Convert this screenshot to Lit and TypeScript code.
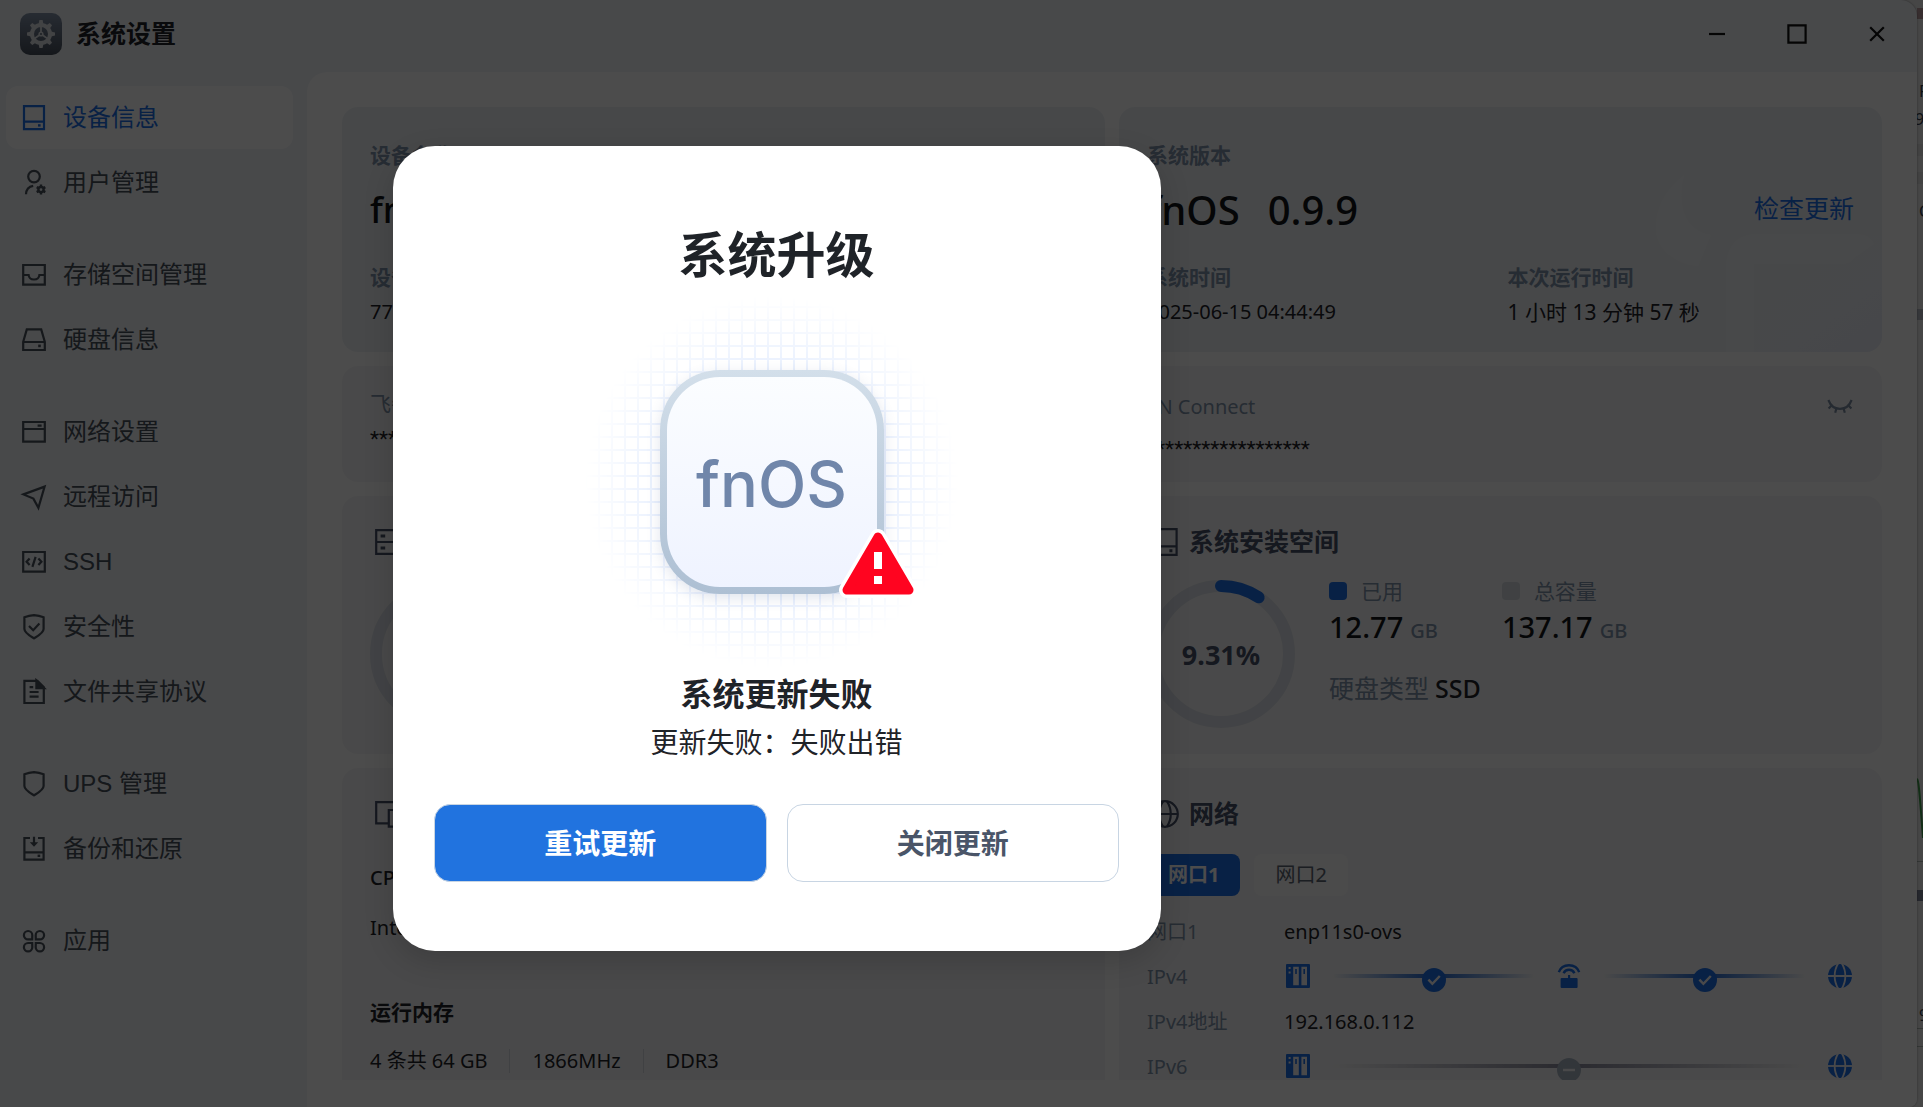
import { LitElement, html, css, svg, nothing, TemplateResult, SVGTemplateResult } from "lit";
import { customElement } from "lit/decorators.js";
import { classMap } from "lit/directives/class-map.js";

type Glyph = SVGTemplateResult;

const glyphs: Record<string, Glyph> = {
  device: svg`<path d="M4 2.2h20v23H4zM4 17.6h20"/><path d="M18 20.2h2.6v2.4H18z" fill="currentColor" stroke="none"/>`,
  user: svg`<circle cx="14" cy="7.6" r="5.8"/><path d="M6 25.2c.2-4.400 2.600-7.600 7.200-8.400"/><g stroke-width="2.400"><circle cx="21" cy="20.600" r="2.600"/><path d="M21 15.600v2M21 23.600v2M16.700 18.100l1.700 1M23.600 22.100l1.700 1M16.700 23.100l1.700-1M23.600 19.100l1.700-1"/></g>`,
  inbox: svg`<path d="M3.200 4h21.600v19.600H3.200zM3.200 14h5.400c.6 6 10.200 6 10.800 0h5.400"/>`,
  disk: svg`<path d="M6.800 3.400h14.400l3.600 12.400v8.200H3.200v-8.200zM3.200 16h21.600"/><path d="M18.200 18.600h2.600v2.600h-2.600z" fill="currentColor" stroke="none"/>`,
  panel: svg`<path d="M3.200 4h21.600v19.600H3.200zM3.200 11h21.600M17.600 7.600h4"/>`,
  send: svg`<path d="M24.600 3.600L3.400 11.400l10 4.200 5 9.200z"/>`,
  code: svg`<path d="M3.200 4h21.600v19.600H3.200z"/><path d="M9.600 10.600l-3 3.200 3 3.200M18.400 10.600l3 3.200-3 3.200M15.600 8.800l-3.200 10"/>`,
  shieldCheck: svg`<path d="M14 2.200c3.200.2 6.400.8 9.600 2V16c0 3.800-5.400 6.800-9.600 9.400C9.800 22.800 4.400 19.800 4.400 16V4.200c3.200-1.200 6.400-1.800 9.600-2z"/><path d="M9 13l4.200 4.200 6.200-6.600"/>`,
  shield: svg`<path d="M14 2.200c3.200.2 6.400.8 9.600 2V16c0 3.800-5.400 6.800-9.600 9.400C9.800 22.800 4.400 19.800 4.400 16V4.200c3.200-1.200 6.400-1.800 9.600-2z"/>`,
  file: svg`<path d="M4.400 2.800h13l6.400 6.400v15.800H4.400z"/><path d="M16.400 2.400v7.800h7.800z" fill="currentColor"/><path d="M9.600 9.200h3.600M9.600 14h9M9.600 18.600h9"/>`,
  backup: svg`<path d="M10 3H4.400v21.600h19.200V3H18M4.400 17.400h19.200M14 1.800V9"/><path d="M9.800 7.200h8.400L14 11.800z" fill="currentColor" stroke="none"/><path d="M17.600 19.600h2.600V22h-2.600z" fill="currentColor" stroke="none"/>`,
  apps: svg`<path d="M12.200 12.400H8.100A4.200 4.200 0 1 1 12.300 8.200zM15.800 12.400h4.100a4.200 4.200 0 1 0-4.200-4.200zM12.200 16H8.100a4.200 4.200 0 1 0 4.200 4.200zM15.800 16h4.100a4.200 4.200 0 1 1-4.200 4.200z"/>`,
  server: svg`<path d="M2.200 2.200h23.600v23.600H2.200zM2.200 14h23.600"/><path d="M6.600 8h4.600M6.600 20h4.600" stroke-width="2.800"/>`,
  cpu: svg`<path d="M14 23.400H2.200V2.200h23.600v6"/><path d="M14.800 10h11v16.600h-11z"/>`,
  globe: svg`<circle cx="14" cy="14" r="12.800"/><path d="M1.200 14h25.600M12 1.400C7 9 7 19 12 26.600M16 1.400C21 9 21 19 16 26.600"/>`,
  space: svg`<path d="M2.600 1.200h23v25.600h-23zM2.600 18.400h23"/><path d="M18.400 21.200h3v3h-3z" fill="currentColor" stroke="none"/>`,
  minimize: svg`<path d="M6 14h16"/>`,
  maximize: svg`<path d="M5.400 5.400h17.200v17.200H5.400z"/>`,
  close: svg`<path d="M7.200 7.200l13.600 13.600M20.800 7.200L7.200 20.800"/>`,
  eyeClosed: svg`<path d="M2.400 7c2.200 6 6.600 8.800 11.600 8.800S23.400 13 25.600 7"/><path d="M5.800 12.200l-3.200 3.400M10.400 15.400l-1.200 4.400M17.600 15.400l1.200 4.400M22.200 12.200l3.200 3.400"/>`,
};

const solid: Record<string, Glyph> = {
  nas: svg`<path fill-rule="evenodd" d="M3 2h22a1 1 0 0 1 1 1v22a1 1 0 0 1-1 1H3a1 1 0 0 1-1-1V3a1 1 0 0 1 1-1zM9.200 4.800v18.400h5.600V4.800zM17.400 4.800v18.400H23V4.800zM4.600 5v2h2V5zM4.600 9.400v2h2v-2z"/><path d="M11.200 7h1.600v5h-1.600zM19.400 7H21v5h-1.600z"/>`,
  router: svg`<path d="M6.600 16h6.400v-3h2.200v3h6.400a1 1 0 0 1 1 1v8a1 1 0 0 1-1 1H6.600a1 1 0 0 1-1-1v-8a1 1 0 0 1 1-1z"/><path d="M3.800 10.200C7 1 21 1 24.200 10.200M8.600 11.200c2-4.600 8.800-4.600 10.800 0" fill="none" stroke="currentColor" stroke-width="2.400"/>`,
  world: svg`<circle cx="14" cy="14" r="12"/><g fill="none" stroke="#f6f6f7" stroke-width="1.800"><path d="M1 14h26"/><path d="M12.400 1C7.400 9 7.400 19 12.400 27M15.600 1C20.600 9 20.600 19 15.600 27"/></g>`,
};

const line = (name: string, cls = "") => html`
  <svg class="icon ${cls}" viewBox="0 0 28 28" fill="none" stroke="currentColor" stroke-width="2.200" aria-hidden="true">${glyphs[name]}</svg>`;
const filled = (name: string) => html`
  <svg class="icon" viewBox="0 0 28 28" fill="currentColor" aria-hidden="true">${solid[name]}</svg>`;

const iconStyles = css`
  .icon { width: 28px; height: 28px; flex: none; display: block; }
`;

/* ---------- sidebar ---------- */

@customElement("settings-nav")
class SettingsNav extends LitElement {
  static styles = [iconStyles, css`
    :host { display: block; }
    nav { display: flex; flex-direction: column; gap: 29px; padding: 14px 14px 14px 6px; }
    .group { display: flex; flex-direction: column; gap: 2px; }
    .item {
      display: flex; align-items: center; gap: 15px; height: 63px; padding: 0 14px;
      border-radius: 12px; color: #49505a; text-decoration: none;
      font-size: 24px; line-height: 36px; font-family: "Liberation Sans", "Noto Sans CJK SC", sans-serif;
    }
    .active { background: #fff; color: #1d6fe8; }
  `];

  private groups: [string, string][][] = [
    [["device", "设备信息"], ["user", "用户管理"]],
    [["inbox", "存储空间管理"], ["disk", "硬盘信息"]],
    [["panel", "网络设置"], ["send", "远程访问"], ["code", "SSH"], ["shieldCheck", "安全性"], ["file", "文件共享协议"]],
    [["shield", "UPS 管理"], ["backup", "备份和还原"]],
    [["apps", "应用"]],
  ];

  render() {
    return html`<nav>${this.groups.map((g) => html`
      <div class="group">${g.map(([icon, label]) => html`
        <a href="#" class=${classMap({ item: true, active: icon === "device" })}>${line(icon)}<span>${label}</span></a>`)}
      </div>`)}</nav>`;
  }
}

/* ---------- device information ---------- */

@customElement("device-info")
class DeviceInfo extends LitElement {
  static styles = [iconStyles, css`
    :host { display: block; overflow: hidden; }
    .grid { display: grid; grid-template-columns: 1fr 1fr; gap: 14px; }
    .card { position: relative; border-radius: 16px; background: #f6f6f7; padding: 0 28px; overflow: hidden; }
    .hero { background: #eff2f6; padding-top: 34px; padding-bottom: 26px; }
    .label { font-size: 21px; line-height: 28px; color: #8193ab; }
    .strong { font-weight: 700; }
    .text { font-size: 20px; line-height: 28px; color: #1f2328; }
    .large { font-size: 21px; }
    .bold { font-weight: 700; }
    .medium { font-weight: 500; }
    .headline { display: flex; align-items: center; justify-content: space-between; margin: 12px 0 26px; height: 56px; }
    .name { font-size: 36px; font-weight: 500; color: #111418; }
    .version { display: flex; gap: 28px; font-size: 40px; font-weight: 500; color: #111418; }
    .link { color: #1d6fe8; font-size: 25px; line-height: 28px; padding-bottom: 2px; text-decoration: none; }
    .pair { display: grid; grid-template-columns: 1fr 1fr; gap: 7px 14px; }
    .mark { position: absolute; right: 0; bottom: 0; width: 240px; height: 200px; }
    .front { position: relative; }

    .secret { padding-top: 23px; padding-bottom: 29px; display: flex; flex-direction: column; gap: 8px; }
    .secret-right { padding-top: 27px; padding-bottom: 19px; gap: 14px; }
    .row { display: flex; justify-content: space-between; align-items: center; height: 28px; }
    .row .label, .net .label { font-size: 20px; }
    .stars { font: 21px/28px Roboto, sans-serif; color: #1f2328; }
    .plain { border: 0; background: none; padding: 0; color: #7d8da3; }

    .section { padding-top: 30px; padding-bottom: 26px; }
    .title { display: flex; align-items: center; gap: 10px; height: 32px; margin: 0 0 22px; padding-left: 4px; font-size: 25px; line-height: 32px; font-weight: 700; color: #475069; }
    .title span { padding-bottom: 2px; }
    .usage { display: flex; gap: 34px; }
    .donut { width: 148px; height: 148px; display: block; }
    .ring { position: relative; }
    .percent { position: absolute; inset: 0; display: grid; place-items: center; font-size: 27px; font-weight: 700; color: #475069; }
    .details { display: grid; grid-template-columns: max-content max-content; column-gap: 64px; align-content: start; }
    .legend { display: flex; align-items: center; gap: 14px; font-size: 21px; line-height: 22px; color: #8193ab; }
    .swatch { width: 18px; height: 18px; border-radius: 4px; background: #1d6fe8; }
    .total { background: #d6dae1; }
    .amount { margin-top: 5px; display: flex; align-items: baseline; gap: 7px; font-size: 29px; line-height: 40px; font-weight: 500; color: #111418; }
    .unit { font-size: 20px; color: #8193ab; }
    .kind { grid-column: 1 / -1; display: flex; gap: 6px; margin-top: 21px; font-size: 25px; line-height: 32px; color: #8193ab; }
    .kind-value { color: #1f2328; font-weight: 500; }

    .cpu { margin: 34px 0 22px; }
    .memory { margin: 56px 0 21px; }
    .specs { display: flex; align-items: center; }
    .specs span + span { margin-left: 22px; padding-left: 22px; border-left: 1px solid #d5dae2; line-height: 24px; }

    .tabs { display: flex; gap: 14px; margin: 24px 0 13px; }
    .tab { height: 42px; padding: 0 21px; border: 0; border-radius: 8px; background: #fbfbfb; color: #5b6472; font: 20px/28px "Noto Sans", "Noto Sans CJK SC", sans-serif; }
    .selected { background: #1d6fe8; color: #fff; font-weight: 700; }
    .net { display: grid; grid-template-columns: 137px 1fr; align-items: center; grid-auto-rows: 45px; margin: 0; }
    .net dd { margin: 0; }
    .path { display: flex; align-items: center; gap: 20px; color: #1d6fe8; padding-bottom: 2px; }
    .wire { flex: 1; height: 4px; position: relative; background: linear-gradient(90deg, transparent, #1f66d0 50%, transparent); }
    .off { background: linear-gradient(90deg, transparent, #8c8c9e 50%, transparent); }
    .dot { position: absolute; left: 50%; top: -6px; margin-left: -12px; width: 24px; height: 24px; }
  `];

  private donut(share: number, label: string) {
    const r = 68;
    const length = 2 * Math.PI * r;
    return html`<div class="ring">
      <svg class="donut" viewBox="0 0 148 148" fill="none" stroke-width="12" stroke-linecap="round">
        <circle cx="74" cy="74" r=${r} stroke="#dde2e9"/>
        ${share ? svg`<circle cx="74" cy="74" r=${r} stroke="#1d6fe8" transform="rotate(-90 74 74)" stroke-dasharray="${length * share} ${length}"/>` : nothing}
      </svg>
      <span class="percent">${label}</span>
    </div>`;
  }

  private dot(ok: boolean) {
    return html`<svg class="dot" viewBox="0 0 24 24" fill="none" stroke="#f6f6f7" stroke-width="2.400">
      <circle cx="12" cy="12" r="12" stroke="none" fill=${ok ? "#1d6fe8" : "#a9b4c4"}/>
      <path d=${ok ? "M6.400 11.600l4 4.200 7.400-7.800" : "M6 12h12"}/>
    </svg>`;
  }

  render() {
    return html`<div class="grid">
      <section class="card hero">
        <div class="label strong">设备名称</div>
        <div class="headline"><span class="name">fnOS</span></div>
        <div class="pair"><span class="label strong">设备 ID</span><span></span><span class="text">77</span></div>
      </section>

      <section class="card hero">
        <svg class="mark" viewBox="0 0 240 200" aria-hidden="true">
          <defs><linearGradient id="tint" x1="0" y1="0" x2="1" y2="1"><stop offset=".4" stop-color="#ebeef8" stop-opacity="0"/><stop offset="1" stop-color="#ebeef8"/></linearGradient></defs>
          <path d="M84 200V120q0-28 28-36H240V200z" fill="url(#tint)"/>
          <path d="M42 23C22 40 14 56 14 76c0 22 20 36 42 38l13-31C44 80 34 54 42 23z" fill="#f2f4f7"/>
          <path d="M84 200V118q0-36 32-36H214q14 0 18 10l-20 14q-4 6-12 6H112V200z" fill="#f2f4f7"/>
        </svg>
        <div class="front">
          <div class="label strong">系统版本</div>
          <div class="headline">
            <span class="version"><span>fnOS</span><span>0.9.9</span></span>
            <a class="link" href="#">检查更新</a>
          </div>
          <div class="pair">
            <span class="label strong">系统时间</span><span class="label strong">本次运行时间</span>
            <span class="text">2025-06-15 04:44:49</span><span class="text large">1 小时 13 分钟 57 秒</span>
          </div>
        </div>
      </section>

      <section class="card secret">
        <div class="label">飞牛 ID</div>
        <div class="stars">****</div>
      </section>
      <section class="card secret secret-right">
        <div class="row"><span class="label">FN Connect</span><button class="plain" aria-label="显示">${line("eyeClosed")}</button></div>
        <div class="stars">******************</div>
      </section>

      <section class="card section">
        <h2 class="title">${line("server")}</h2>
        ${this.donut(0, "")}
      </section>
      <section class="card section">
        <h2 class="title">${line("space")}<span>系统安装空间</span></h2>
        <div class="usage">
          ${this.donut(0.0931, "9.31%")}
          <div class="details">
            <span class="legend"><i class="swatch"></i>已用</span>
            <span class="legend"><i class="swatch total"></i>总容量</span>
            <span class="amount">12.77<span class="unit">GB</span></span>
            <span class="amount">137.17<span class="unit">GB</span></span>
            <span class="kind">硬盘类型<span class="kind-value">SSD</span></span>
          </div>
        </div>
      </section>

      <section class="card section">
        <h2 class="title">${line("cpu")}</h2>
        <div class="text medium cpu">CPU</div>
        <div class="text">Intel</div>
        <div class="text large bold memory">运行内存</div>
        <div class="text specs"><span>4 条共 64 GB</span><span>1866MHz</span><span>DDR3</span></div>
      </section>
      <section class="card section">
        <h2 class="title">${line("globe")}<span>网络</span></h2>
        <div class="tabs"><button class="tab selected">网口1</button><button class="tab">网口2</button></div>
        <dl class="net">
          <dt class="label">网口1</dt><dd class="text">enp11s0-ovs</dd>
          <dt class="label">IPv4</dt>
          <dd class="path">${filled("nas")}<span class="wire">${this.dot(true)}</span>${filled("router")}<span class="wire">${this.dot(true)}</span>${filled("world")}</dd>
          <dt class="label">IPv4地址</dt><dd class="text">192.168.0.112</dd>
          <dt class="label">IPv6</dt>
          <dd class="path">${filled("nas")}<span class="wire off">${this.dot(false)}</span>${filled("world")}</dd>
        </dl>
      </section>
    </div>`;
  }
}

/* ---------- update dialog ---------- */

@customElement("update-dialog")
class UpdateDialog extends LitElement {
  static styles = css`
    :host { display: block; width: 768px; }
    .dialog { padding: 76px 42px 69px 41px; border-radius: 42px; background: #fff; color: #1f2328; text-align: center; box-shadow: 0 10px 30px rgba(0, 0, 0, 0.16); }
    h1 { margin: 0 0 84px; font-size: 49px; line-height: 64px; font-weight: 700; }
    .art { display: flex; justify-content: center; padding-right: 10px; margin-bottom: 76px; }
    .tile {
      position: relative; display: grid; place-items: center; width: 210px; height: 206px; padding-top: 4px;
      border: 7px solid transparent; border-radius: 60px;
      background: linear-gradient(#fbfdff, #eff3ff) padding-box, linear-gradient(#d3dfea, #adbfd3) border-box;
      box-shadow: 0 4px 14px rgba(60, 90, 140, 0.16);
      font: 500 63px/72px Inter, sans-serif; color: #7086aa;
    }
    .mesh { position: absolute; left: 50%; top: 50%; width: 390px; height: 390px; margin: -195px 0 0 -195px; z-index: 0; }
    .frame { position: relative; }
    .alert { position: absolute; right: -34px; bottom: -5px; width: 80px; height: 74px; }
    h2 { margin: 0; font-size: 32px; line-height: 48px; font-weight: 700; }
    p { margin: 0 0 38px; font-size: 28px; line-height: 48px; }
    .actions { display: grid; grid-template-columns: 1fr 1fr; gap: 20px; }
    button { height: 78px; border: 1px solid #c8d5e3; border-radius: 16px; background: #fff; color: #4a5568; font: 700 28px/40px "Noto Sans", "Noto Sans CJK SC", sans-serif; }
    .primary { background: #2173df; color: #fff; }
  `;

  render() {
    return html`<div class="dialog" role="dialog" aria-labelledby="title">
      <h1 id="title">系统升级</h1>
      <div class="art"><div class="frame">
        <svg class="mesh" viewBox="0 0 390 390" aria-hidden="true">
          <defs>
            <pattern id="cells" width="13" height="13" patternUnits="userSpaceOnUse" x="8" y="6"><path d="M0 1h13M1 0v13" stroke="#e4edfd" stroke-width="2" fill="none"/></pattern>
            <radialGradient id="fade"><stop offset=".5" stop-color="#fff"/><stop offset=".96" stop-color="#000"/></radialGradient>
            <mask id="round"><rect width="390" height="390" fill="url(#fade)"/></mask>
          </defs>
          <rect width="390" height="390" fill="url(#cells)" mask="url(#round)"/>
        </svg>
        <div class="tile">fnOS</div>
        <svg class="alert" viewBox="0 0 80 74" aria-hidden="true">
          <path d="M40 12L9 65H71z" fill="#fff" stroke="#fff" stroke-width="16" stroke-linejoin="round"/>
          <path d="M40 12L9 65H71z" fill="#ff0420" stroke="#ff0420" stroke-width="9" stroke-linejoin="round"/>
          <path d="M36 27h8v17h-8zM36 51h8v8h-8z" fill="#fff"/>
        </svg>
      </div></div>
      <h2>系统更新失败</h2>
      <p>更新失败：失败出错</p>
      <div class="actions"><button class="primary">重试更新</button><button>关闭更新</button></div>
    </div>`;
  }
}

/* ---------- desktop ---------- */

@customElement("app-root")
class AppRoot extends LitElement {
  static styles = [iconStyles, css`
    :host { display: block; font-family: "Noto Sans", "Noto Sans CJK SC", sans-serif; }
    .desktop { display: flex; height: 100vh; overflow: hidden; position: relative; background: #eaeaea; }
    .window { flex: 1; min-width: 0; display: flex; flex-direction: column; background: #f0f3f7; border-radius: 0 16px 8px 0; overflow: hidden; box-shadow: 0 0 2px rgba(0, 0, 0, 0.4); z-index: 1; }
    .bar { display: flex; align-items: center; height: 72px; padding: 0 26px 4px 20px; box-sizing: border-box; }
    .logo { width: 42px; height: 42px; }
    .caption { flex: 1; margin-left: 14px; padding-bottom: 2px; font-size: 25px; line-height: 32px; font-weight: 700; color: #1f2328; }
    .controls { display: flex; gap: 52px; }
    .controls button { border: 0; padding: 0; background: none; color: #111; }
    .body { flex: 1; min-height: 0; display: flex; }
    settings-nav { width: 307px; flex: none; }
    .panel { flex: 1; min-width: 0; display: flex; padding: 35px 35px 27px; background: #fefefe; border-radius: 20px 0 0 0; }
    device-info { flex: 1; }
    .edge { width: 6px; height: 100%; flex: none; overflow: hidden; font: 16px "Noto Sans", sans-serif; }
    .overlay { position: absolute; inset: 0; z-index: 2; display: flex; align-items: center; justify-content: center; padding: 0 369px 10px 0; background: rgba(0, 0, 0, 0.7); }
  `];

  private logo() {
    const teeth = [0, 45, 90, 135, 180, 225, 270, 315];
    return html`<svg class="logo" viewBox="0 0 42 42" aria-hidden="true">
      <defs><linearGradient id="lg" x2="0" y2="1"><stop stop-color="#8392a8"/><stop offset="1" stop-color="#474f5c"/></linearGradient></defs>
      <rect width="42" height="42" rx="10" fill="url(#lg)"/>
      <g fill="#dcdfe3">${teeth.map((a) => svg`<path d="M18.600 11l.8-4h3.200l.8 4z" transform="rotate(${a} 21 21)"/>`)}</g>
      <circle cx="21" cy="21" r="9" fill="none" stroke="#dcdfe3" stroke-width="4"/>
      <g stroke="#dcdfe3" stroke-width="1.800"><path d="M21 21V13M21 21l-6.400 4.400M21 21l6.400 4.400"/></g>
      <circle cx="21" cy="21" r="2.600" fill="#dcdfe3"/><circle cx="21" cy="21" r="1" fill="#5d6878"/>
    </svg>`;
  }

  render(): TemplateResult {
    return html`<div class="desktop">
      <div class="window">
        <header class="bar">
          ${this.logo()}<span class="caption">系统设置</span>
          <div class="controls">
            <button aria-label="最小化">${line("minimize")}</button>
            <button aria-label="最大化">${line("maximize")}</button>
            <button aria-label="关闭">${line("close")}</button>
          </div>
        </header>
        <div class="body"><settings-nav></settings-nav><main class="panel"><device-info></device-info></main></div>
      </div>
      <svg class="edge" aria-hidden="true">
        <rect y="8" width="6" height="11" fill="#b99a9f"/>
        <rect y="144" width="6" height="12" fill="#dcdcdc"/><rect y="172" width="6" height="12" fill="#dcdcdc"/>
        <rect y="309" width="6" height="11" fill="#b4b8c4"/>
        <rect y="861" width="6" height="1" fill="#aab4b0"/><rect y="890" width="6" height="11" fill="#7c8296"/>
        <rect y="1028" width="6" height="1" fill="#aab4b0"/><rect y="1046" width="6" height="1" fill="#aab4b0"/>
        <path d="M0 779C2 780 3 800 6 838" stroke="#3f9a4a" stroke-width="2" fill="none"/>
        <g fill="#333c4c"><text x="2" y="97">P</text><text x="-2" y="125">9</text><text x="2" y="217">C</text><text x="2" y="1021">9</text></g>
      </svg>
      <div class="overlay"><update-dialog></update-dialog></div>
    </div>`;
  }
}
